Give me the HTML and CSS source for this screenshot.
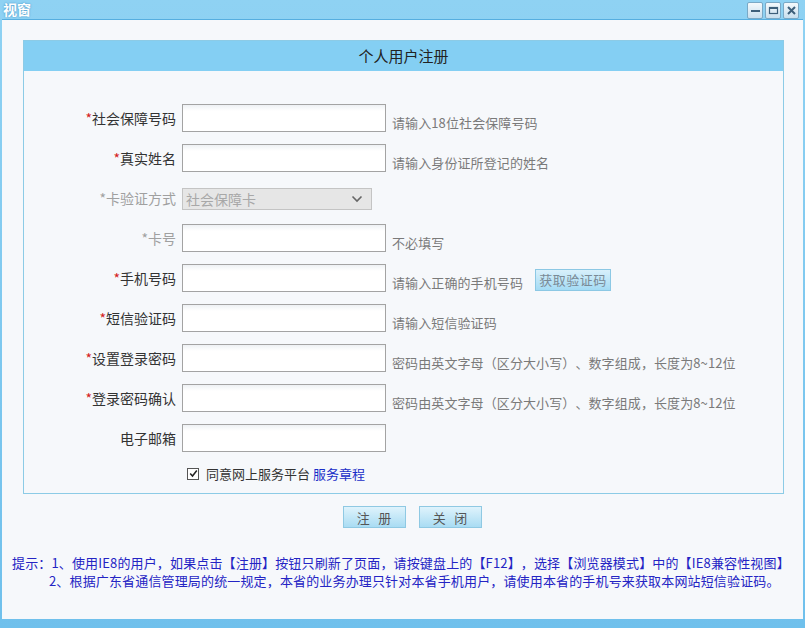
FILE: index.html
```html
<!DOCTYPE html>
<html lang="zh-CN">
<head>
<meta charset="utf-8">
<title>视窗</title>
<link rel="stylesheet" href="styles.css">
</head>
<body>
<div class="win">
  <div class="titlebar">
    <span class="title">视窗</span>
    <div class="wbtns">
      <span class="wbtn"><svg width="11" height="11" viewBox="0 0 11 11"><rect x="1" y="5" width="9" height="2" fill="#3d5f7a"/></svg></span>
      <span class="wbtn"><svg width="11" height="11" viewBox="0 0 11 11"><rect x="1.5" y="2.5" width="8" height="6" fill="none" stroke="#3d5f7a" stroke-width="1.2"/><rect x="1.5" y="2" width="8" height="2" fill="#3d5f7a"/></svg></span>
      <span class="wbtn"><svg width="11" height="11" viewBox="0 0 11 11"><path d="M2 2 L9 9 M9 2 L2 9" stroke="#3d5f7a" stroke-width="2"/></svg></span>
    </div>
  </div>
  <div class="content">
    <div class="panel">
      <div class="panel-head">个人用户注册</div>
      <div class="form">
        <div class="row">
          <label class="lbl"><i>*</i>社会保障号码</label>
          <input class="inp" type="text">
          <span class="hint">请输入18位社会保障号码</span>
        </div>
        <div class="row">
          <label class="lbl"><i>*</i>真实姓名</label>
          <input class="inp" type="text">
          <span class="hint">请输入身份证所登记的姓名</span>
        </div>
        <div class="row">
          <label class="lbl dis">*卡验证方式</label>
          <div class="sel"><span>社会保障卡</span><svg width="12" height="8" viewBox="0 0 12 8"><path d="M1.5 1.5 L6 6 L10.5 1.5" fill="none" stroke="#666" stroke-width="1.6"/></svg></div>
        </div>
        <div class="row">
          <label class="lbl dis">*卡号</label>
          <input class="inp" type="text">
          <span class="hint">不必填写</span>
        </div>
        <div class="row">
          <label class="lbl"><i>*</i>手机号码</label>
          <input class="inp" type="text">
          <span class="hint">请输入正确的手机号码</span>
          <button class="codebtn" type="button">获取验证码</button>
        </div>
        <div class="row">
          <label class="lbl"><i>*</i>短信验证码</label>
          <input class="inp" type="text">
          <span class="hint">请输入短信验证码</span>
        </div>
        <div class="row">
          <label class="lbl"><i>*</i>设置登录密码</label>
          <input class="inp" type="password">
          <span class="hint">密码由英文字母（区分大小写）、数字组成，长度为8~12位</span>
        </div>
        <div class="row">
          <label class="lbl"><i>*</i>登录密码确认</label>
          <input class="inp" type="password">
          <span class="hint">密码由英文字母（区分大小写）、数字组成，长度为8~12位</span>
        </div>
        <div class="row">
          <label class="lbl">电子邮箱</label>
          <input class="inp" type="text">
        </div>
        <div class="agree">
          <span class="cb"><svg width="9" height="9" viewBox="0 0 9 9"><path d="M1.2 4.5 L3.5 7 L7.8 1.5" fill="none" stroke="#222" stroke-width="1.5"/></svg></span>
          <span>同意网上服务平台 <a class="link">服务章程</a></span>
        </div>
      </div>
    </div>
    <div class="actions">
      <button class="btn" type="button">注&nbsp;&nbsp;&nbsp;册</button>
      <button class="btn" type="button">关&nbsp;&nbsp;&nbsp;闭</button>
    </div>
    <div class="tips">
      <p>提示：1、使用IE8的用户，如果点击【注册】按钮只刷新了页面，请按键盘上的【F12】，选择【浏览器模式】中的【IE8兼容性视图】</p>
      <p class="ind">2、根据广东省通信管理局的统一规定，本省的业务办理只针对本省手机用户，请使用本省的手机号来获取本网站短信验证码。</p>
    </div>
  </div>
  <div class="bottom"></div>
</div>
</body>
</html>
```

FILE: styles.css
```css
* { box-sizing: border-box; }
html, body { margin: 0; padding: 0; }
body {
  width: 805px;
  height: 628px;
  overflow: hidden;
  font-family: "Noto Sans CJK SC", "Liberation Sans", sans-serif;
  background: #5fb6e6;
  text-spacing-trim: space-all;
}
.win {
  width: 805px;
  height: 628px;
  display: flex;
  flex-direction: column;
  background: linear-gradient(#8fd2f3, #6fc0ec);
}
.titlebar {
  height: 19px;
  display: flex;
  align-items: center;
  justify-content: space-between;
  padding: 0 6px 0 3px;
}
.title {
  color: #fff;
  font-weight: bold;
  font-size: 14px;
  line-height: 19px;
  text-shadow: 0 0 2px #3c8cc0;
}
.wbtns { display: flex; gap: 2px; padding-top: 1px; }
.wbtn {
  width: 16px;
  height: 17px;
  border: 1px solid #7aa9c6;
  border-radius: 2px;
  background: linear-gradient(#f4f9fc, #c8dfee);
  display: flex;
  align-items: center;
  justify-content: center;
}
.content {
  height: 600px;
  margin: 0 2px 0 2px;
  background: #f6f8fb;
  border-top: 1px solid #56aee0;
  padding: 20px 19px 0 21px;
  display: flex;
  flex-direction: column;
}
.bottom { flex: 1; }
.panel {
  border: 1px solid #8ccbe6;
  height: 454px;
}
.panel-head {
  height: 30px;
  background: #84cff3;
  text-align: center;
  font-size: 15px;
  line-height: 30px;
  color: #222;
}
.form {
  padding-top: 33px;
}
.row {
  display: flex;
  align-items: center;
  height: 28px;
  margin-bottom: 12px;
}
.lbl {
  width: 152px;
  text-align: right;
  font-size: 14px;
  color: #333;
  margin-right: 6px;
  line-height: 28px;
}
.lbl i { font-style: normal; color: #d42020; }
.lbl.dis { color: #a0a0a0; }
.inp {
  width: 204px;
  height: 28px;
  border: 1px solid #a3a3a3;
  background: linear-gradient(#eef1f4 0, #fff 6px);
  margin: 0;
  padding: 0 3px;
  font: inherit;
}
.hint {
  margin-left: 6px;
  font-size: 13px;
  color: #7a7a7a;
  align-self: flex-end;
  line-height: 14px;
  margin-bottom: 2px;
  letter-spacing: 0.1px;
}
.sel {
  width: 190px;
  height: 22px;
  border: 1px solid #c4c4c4;
  background: #e6e6e6;
  display: flex;
  align-items: center;
  justify-content: space-between;
  padding: 0 8px 0 3px;
  font-size: 14px;
  color: #a8a8a8;
  margin-top: 1px;
}
.codebtn {
  margin-left: 12px;
  width: 76px;
  height: 22px;
  border: 1px solid #8cc8e4;
  background: linear-gradient(#d8f0fb, #a4dbf4);
  font: inherit;
  font-size: 13px;
  color: #7a8a96;
  padding: 0;
  letter-spacing: 0.5px;
  margin-top: 3px;
}
.agree {
  display: flex;
  align-items: center;
  margin-left: 163px;
  margin-top: 3px;
  font-size: 13px;
  color: #333;
}
.cb {
  width: 12px;
  height: 12px;
  border: 1px solid #555;
  background: #fff;
  display: flex;
  align-items: center;
  justify-content: center;
  margin-right: 7px;
}
.link { color: #1a2ec8; text-decoration: none; }
.actions {
  display: flex;
  justify-content: center;
  gap: 13px;
  margin-top: 12px;
  padding-left: 17px;
}
.btn {
  width: 63px;
  height: 22px;
  border: 1px solid #8fc9e3;
  background: linear-gradient(#dff3fc, #a9dcf3);
  font: inherit;
  font-size: 13px;
  color: #555;
  padding: 0;
}
.tips {
  margin-top: 26px;
  margin-left: -11px;
  font-size: 13px;
  line-height: 18px;
  color: #2424c4;
  letter-spacing: 0.15px;
}
.tips p { margin: 0; white-space: nowrap; }
.tips .ind { padding-left: 37px; }
```
